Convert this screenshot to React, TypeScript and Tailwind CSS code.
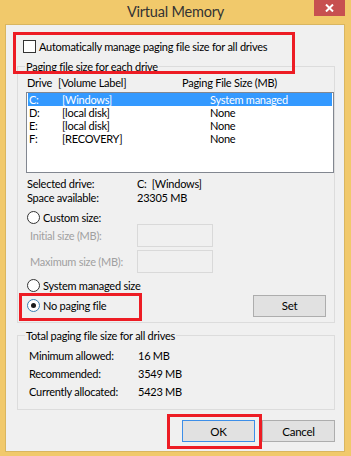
import React from "react";

function Radio({ checked }: { checked?: boolean }) {
  return (
    <span
      className={
        "flex h-[13px] w-[13px] shrink-0 items-center justify-center rounded-full border bg-white " +
        (checked ? "border-[#3c7fb1]" : "border-[#333333]")
      }
    >
      {checked && <span className="h-[5px] w-[5px] rounded-full bg-[#1a1a1a]" />}
    </span>
  );
}

function Btn({ label, def }: { label: string; def?: boolean }) {
  return (
    <div
      className={
        "flex h-[22px] w-[73px] items-center justify-center border bg-[#e1e1e1] text-[11.5px] text-black " +
        (def ? "border-[#3c8ee8]" : "border-[#adadad]")
      }
    >
      {label}
    </div>
  );
}

const drives = [
  { d: "C:", l: "[Windows]", s: "System managed", sel: true },
  { d: "D:", l: "[local disk]", s: "None" },
  { d: "E:", l: "[local disk]", s: "None" },
  { d: "F:", l: "[RECOVERY]", s: "None" },
];

export default function App() {
  return (
    <div className="relative flex h-[456px] w-[351px] flex-col overflow-hidden whitespace-nowrap bg-[#f1c96b] font-['Lato',sans-serif] text-[11px] leading-[13px] tracking-[-0.25px] text-black">
      {/* title bar */}
      <div className="relative flex h-[24px] items-center justify-center pb-[2px] text-[14.5px] tracking-[-0.2px] text-[#333333]">
        Virtual Memory
        <div className="absolute right-[6px] top-0 flex h-[16px] w-[31px] items-center justify-center bg-[#c75050]">
          <svg width="9" height="8" viewBox="0 0 9 8">
            <path d="M1 0.5 L8 7.5 M8 0.5 L1 7.5" stroke="white" strokeWidth="2" />
          </svg>
        </div>
      </div>

      {/* client */}
      <div className="ml-[5px] flex h-[428px] w-[340px] flex-col border border-[#d9b660] bg-[#f0f0f0]">
        <div className="mt-[13px] flex h-[17px] items-center pl-[17px]">
          <span className="h-[13px] w-[13px] border border-[#333333] bg-white" />
          <span className="ml-[3px]">Automatically manage paging file size for all drives</span>
        </div>

        {/* group 1 */}
        <div className="relative ml-[11px] mt-[11px] flex w-[318px] flex-col border border-[#dcdcdc] pb-[5px]">
          <span className="absolute left-[7px] top-[-8px] bg-[#f0f0f0] px-[1px] leading-[15px]">
            Paging file size for each drive
          </span>
          <div className="mt-[7px] flex h-[16px] items-center pl-[9px]">
            <span className="w-[31px]">Drive</span>
            <span className="w-[124px]">[Volume Label]</span>
            <span>Paging File Size (MB)</span>
          </div>
          <div className="ml-[8px] mt-[2px] h-[81px] w-[308px] border border-[#828790] bg-white">
            {drives.map((r) => (
              <div
                key={r.d}
                className={
                  "mx-[1px] flex h-[13px] items-center pl-[1px] leading-[13px] " +
                  (r.sel ? "bg-[#3399ff] text-white" : "")
                }
              >
                <span className="w-[33px]">{r.d}</span>
                <span className="w-[148px]">{r.l}</span>
                <span>{r.s}</span>
              </div>
            ))}
          </div>
          <div className="mt-[3px] flex h-[14px] items-center pl-[9px]">
            <span className="w-[110px]">Selected drive:</span>
            <span>C:&nbsp;&nbsp;[Windows]</span>
          </div>
          <div className="flex h-[14px] items-center pl-[9px]">
            <span className="w-[110px]">Space available:</span>
            <span>23305 MB</span>
          </div>
          <div className="mt-[6px] flex h-[14px] items-center pl-[9px]">
            <Radio />
            <span className="ml-[3px]">Custom size:</span>
          </div>
          <div className="flex h-[23px] items-center pl-[12px] text-[#a0a0a0]">
            <span className="w-[107px]">Initial size (MB):</span>
            <span className="h-[23px] w-[76px] border border-[#d9d9d9] bg-[#f0f0f0]" />
          </div>
          <div className="mt-[3px] flex h-[23px] items-center pl-[12px] text-[#a0a0a0]">
            <span className="w-[107px]">Maximum size (MB):</span>
            <span className="h-[23px] w-[76px] border border-[#d9d9d9] bg-[#f0f0f0]" />
          </div>
          <div className="mt-[5px] flex h-[14px] items-center pl-[9px]">
            <Radio />
            <span className="ml-[3px]">System managed size</span>
          </div>
          <div className="mt-[2px] flex h-[23px] items-center pl-[9px]">
            <Radio checked />
            <span className="ml-[3px]">No paging file</span>
            <div className="ml-auto mr-[8px]">
              <Btn label="Set" />
            </div>
          </div>
        </div>

        {/* group 2 */}
        <div className="relative ml-[11px] mt-[12px] flex w-[318px] flex-col border border-[#dcdcdc] pb-[9px] pt-[10px]">
          <span className="absolute left-[7px] top-[-8px] bg-[#f0f0f0] px-[1px] leading-[15px]">
            Total paging file size for all drives
          </span>
          {[
            ["Minimum allowed:", "16 MB"],
            ["Recommended:", "3549 MB"],
            ["Currently allocated:", "5423 MB"],
          ].map(([a, b]) => (
            <div key={a} className="flex h-[18px] items-center pl-[11px]">
              <span className="w-[109px]">{a}</span>
              <span>{b}</span>
            </div>
          ))}
        </div>

        <div className="mt-[10px] flex justify-end gap-[7px] pr-[9px]">
          <Btn label="OK" def />
          <Btn label="Cancel" />
        </div>
      </div>

      {/* highlight boxes */}
      <div className="absolute left-[13px] top-[32px] h-[42px] w-[282px] border-[3px] border-[#ed1c24]" />
      <div className="absolute left-[19px] top-[293px] h-[28px] w-[123px] border-[3px] border-[#ed1c24]" />
      <div className="absolute left-[167px] top-[414px] h-[35px] w-[95px] border-[3px] border-[#ed1c24]" />
    </div>
  );
}
